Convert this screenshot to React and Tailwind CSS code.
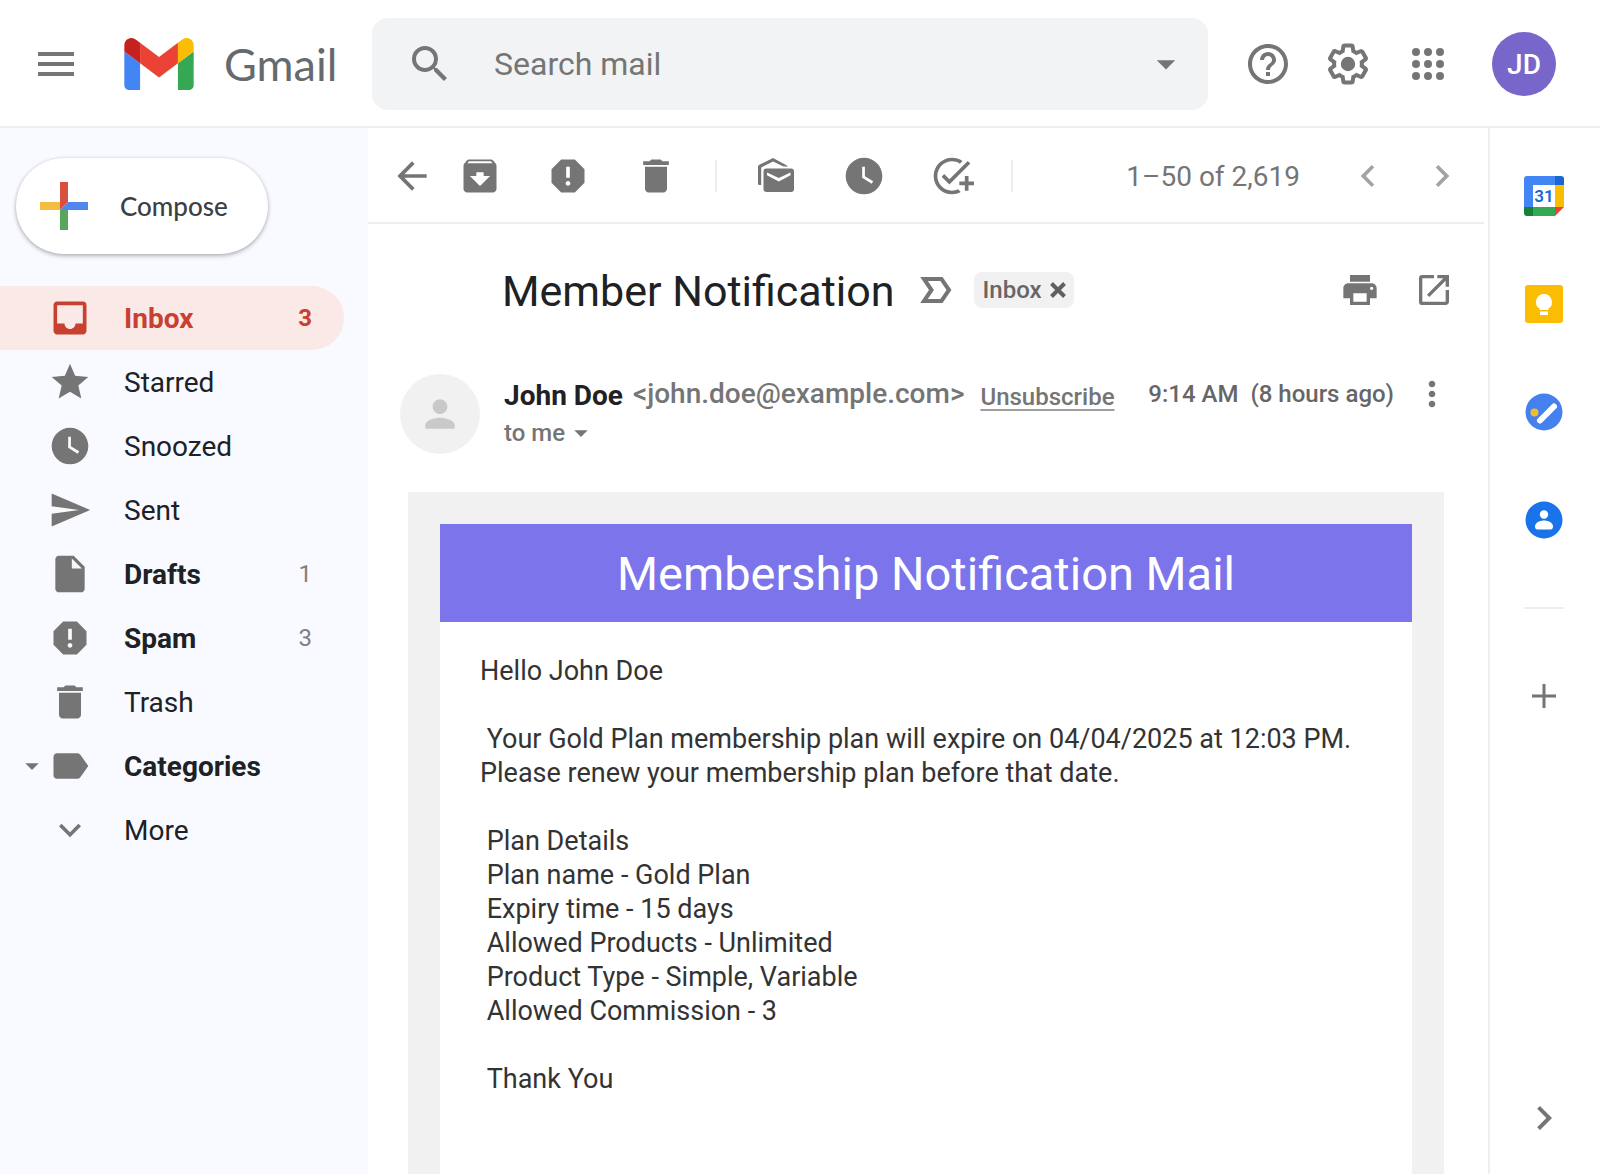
import React from "react";
import {
  MdMenu, MdSearch, MdHelpOutline, MdInbox, MdStar, MdWatchLater, MdSend,
  MdInsertDriveFile, MdReport, MdDelete, MdLabel, MdExpandMore, MdArrowBack,
  MdArchive, MdAddTask, MdPrint, MdOpenInNew, MdMoreVert,
  MdPerson, MdChevronLeft, MdChevronRight, MdArrowDropDown,
} from "react-icons/md";

function GmailLogo() {
  return (
    <svg viewBox="52 42 88 66" className="h-[52px] w-[70px]" aria-hidden="true">
      <path fill="#4285f4" d="M58 108h14V74L52 59v43c0 3.32 2.69 6 6 6" />
      <path fill="#34a853" d="M120 108h14c3.32 0 6-2.69 6-6V59l-20 15" />
      <path fill="#fbbc04" d="M120 48v26l20-15v-8c0-7.42-8.47-11.65-14.4-7.2" />
      <path fill="#ea4335" d="M72 74V48l24 18 24-18v26L96 92" />
      <path fill="#c5221f" d="M52 51v8l20 15V48l-5.6-4.2c-5.94-4.45-14.4-.22-14.4 7.2" />
    </svg>
  );
}

function SettingsIcon() {
  return (
    <svg viewBox="0 0 24 24" fill="currentColor" className="size-12" aria-hidden="true">
      <path d="M13.85 22.25h-3.7c-.74 0-1.36-.54-1.45-1.27l-.27-1.89c-.27-.14-.53-.29-.79-.46l-1.8.72c-.7.26-1.47-.03-1.81-.65L2.2 15.53c-.35-.66-.2-1.44.36-1.88l1.53-1.19c-.01-.15-.02-.3-.02-.46 0-.15.01-.31.02-.46l-1.52-1.19c-.59-.45-.74-1.26-.37-1.88l1.85-3.19c.34-.62 1.11-.9 1.79-.63l1.81.73c.26-.17.52-.32.78-.46l.27-1.91c.09-.7.71-1.25 1.44-1.25h3.7c.74 0 1.36.54 1.45 1.27l.27 1.89c.27.14.53.29.79.46l1.8-.72c.71-.26 1.48.03 1.82.65l1.84 3.18c.36.66.2 1.44-.36 1.88l-1.52 1.19c.01.15.02.3.02.46s-.01.31-.02.46l1.52 1.19c.56.45.72 1.23.37 1.86l-1.86 3.22c-.34.62-1.11.9-1.8.63l-1.8-.72c-.26.17-.52.32-.78.46l-.27 1.91c-.1.68-.72 1.22-1.46 1.22zm-3.23-2h2.76l.37-2.55.53-.22c.44-.18.88-.44 1.34-.78l.45-.34 2.38.96 1.38-2.4-2.03-1.58.07-.56c.03-.26.06-.51.06-.78s-.03-.53-.06-.78l-.07-.56 2.03-1.58-1.39-2.4-2.39.96-.45-.35c-.42-.32-.87-.58-1.33-.77l-.52-.22-.37-2.55h-2.76l-.37 2.55-.53.21c-.44.19-.88.44-1.34.79l-.45.33-2.38-.95-1.39 2.39 2.03 1.58-.07.56a7 7 0 0 0-.06.79c0 .26.02.53.06.78l.07.56-2.03 1.58 1.38 2.4 2.39-.96.45.35c.43.33.86.58 1.33.77l.53.22.38 2.55z" />
      <circle cx="12" cy="12" r="3.6" />
    </svg>
  );
}

function AppsIcon() {
  return (
    <svg viewBox="0 0 24 24" fill="currentColor" className="size-12" aria-hidden="true">
      {[6, 12, 18].map((y) => [6, 12, 18].map((x) => <circle key={`${x}-${y}`} cx={x} cy={y} r="2" />))}
    </svg>
  );
}

function ComposePlus() {
  return (
    <svg viewBox="0 0 48 48" className="size-12" aria-hidden="true">
      <path fill="#d95040" d="M20 0h8v20l-8 8z" />
      <path fill="#f2bd42" d="M0 20h20v8H0z" />
      <path fill="#58a55c" d="M20 28h8v20h-8z" />
      <path fill="#5186ec" d="M28 20h20v8H20z" />
    </svg>
  );
}

function UnreadIcon() {
  return (
    <svg viewBox="0 0 44 44" className="size-11" fill="currentColor" aria-hidden="true">
      <path d="M4 30V13c0-1 .4-1.700 1.300-2.200L19 4l13.500 7.200c.6.300 1 .8 1.200 1.300h-4.200L19 7.500 7.200 13.500V31H6c-1.200 0-2-.4-2-1z" />
      <path fillRule="evenodd" d="M12.500 14.500H37a3 3 0 0 1 3 3V35a3 3 0 0 1-3 3H12.500a3 3 0 0 1-3-3V17.500a3 3 0 0 1 3-3zm.5 4v2.700L24.800 27.500l11.700-6.300v-2.700L24.800 24z" />
    </svg>
  );
}

function ImportantIcon() {
  return (
    <svg viewBox="0 0 32 26" className="ml-[26px] h-[26px] w-8 shrink-0" fill="none" stroke="currentColor" strokeWidth="4" aria-hidden="true">
      <path d="M4 2h17.500L29 13l-7.500 11H4l7.500-11z" />
    </svg>
  );
}

function RemoveIcon() {
  return (
    <svg viewBox="0 0 16 16" className="size-4" stroke="#5f5f5f" strokeWidth="4" aria-hidden="true">
      <path d="M1.500 1.500l13 13M14.500 1.500l-13 13" />
    </svg>
  );
}

function CalendarIcon() {
  return (
    <svg viewBox="0 0 40 40" className="size-10" aria-hidden="true">
      <path fill="#4285f4" d="M3 0h28v10H10v21H0V3a3 3 0 0 1 3-3z" />
      <path fill="#1967d2" d="M31 0h6a3 3 0 0 1 3 3v6h-9z" />
      <path fill="#fbbc04" d="M31 9h9v22h-9z" />
      <path fill="#ea4335" d="M31 31h9l-9 9z" />
      <path fill="#34a853" d="M9 31h22v9H9z" />
      <path fill="#188038" d="M0 31h9v9H3a3 3 0 0 1-3-3z" />
      <path fill="#fff" d="M9 9h22v22H9z" />
      <text x="20" y="26" textAnchor="middle" fontFamily="Roboto, sans-serif" fontSize="17" fontWeight="600" fill="#1967d2">31</text>
    </svg>
  );
}

function KeepIcon() {
  return (
    <svg viewBox="0 0 40 40" className="size-10" aria-hidden="true">
      <rect x="1" y="1" width="38" height="38" rx="3" fill="#fbbc04" />
      <path fill="#fff" d="M20 10a8 8 0 0 0-4.500 14.600V26h9v-1.400A8 8 0 0 0 20 10zM16 27.500h8V31h-8z" />
    </svg>
  );
}

function TasksIcon() {
  return (
    <svg viewBox="0 0 40 40" className="size-10" aria-hidden="true">
      <circle cx="20" cy="20" r="18.500" fill="#4480ee" />
      <circle cx="10.500" cy="20.500" r="4" fill="#f2bd2b" />
      <path d="M16 28.500 30 14.500" stroke="#fff" strokeWidth="6" strokeLinecap="round" />
    </svg>
  );
}

function ContactsIcon() {
  return (
    <svg viewBox="0 0 40 40" className="size-10" aria-hidden="true">
      <circle cx="20" cy="20" r="18.500" fill="#1a73e8" />
      <circle cx="20" cy="14.500" r="4.200" fill="#fff" />
      <path fill="#fff" d="M11 26.500c0-4 5-6 9-6s9 2 9 6c0 1.700-1 3-2.500 3h-13c-1.500 0-2.500-1.300-2.500-3z" />
    </svg>
  );
}

function IconButton({ label, className = "", children }) {
  return (
    <button type="button" aria-label={label} className={`flex shrink-0 items-center justify-center ${className}`}>
      {children}
    </button>
  );
}

const folders = [
  { name: "Inbox", Icon: MdInbox, count: "3", active: true, strong: true },
  { name: "Starred", Icon: MdStar },
  { name: "Snoozed", Icon: MdWatchLater },
  { name: "Sent", Icon: MdSend },
  { name: "Drafts", Icon: MdInsertDriveFile, count: "1", strong: true },
  { name: "Spam", Icon: MdReport, count: "3", strong: true },
  { name: "Trash", Icon: MdDelete },
  { name: "Categories", Icon: MdLabel, strong: true, expandable: true },
  { name: "More", Icon: MdExpandMore },
];

function Folder({ name, Icon, count, active, strong, expandable }) {
  return (
    <li>
      <a
        href="#"
        className={`flex h-16 items-center rounded-r-full pr-8 ${active ? "bg-[#fae9e7] text-[#c8402f]" : "text-[#202124]"}`}
      >
        <span className="flex w-12 justify-end text-[#757575]">
          {expandable && <MdArrowDropDown className="size-8" />}
        </span>
        <Icon className={`size-11 shrink-0 ${active ? "" : "text-[#757575]"}`} />
        <span className={`ml-8 flex-1 pt-0.5 text-[28px] leading-8 ${strong ? "font-bold" : ""}`}>{name}</span>
        {count && <span className={`text-2xl ${active ? "font-bold" : "text-[#808080]"}`}>{count}</span>}
      </a>
    </li>
  );
}

function Header() {
  return (
    <header className="flex h-32 items-center border-b-2 border-[#eeeeee] pr-11 pt-0.5 text-[#757575]">
      <div className="flex w-[372px] shrink-0 items-center pl-8">
        <IconButton label="Main menu"><MdMenu className="size-12" /></IconButton>
        <a href="#" className="ml-11 flex items-center gap-[30px] text-[#666a6e]">
          <GmailLogo />
          <span className="font-[Lato,sans-serif] text-[45px] leading-[52px]">Gmail</span>
        </a>
      </div>
      <form className="flex h-[92px] flex-1 items-center rounded-2xl bg-[#f1f3f4] pl-[34px] pr-5">
        <IconButton label="Search"><MdSearch className="size-12" /></IconButton>
        <input
          type="text"
          aria-label="Search mail"
          placeholder="Search mail"
          className="ml-10 min-w-0 flex-1 bg-transparent text-[32px] outline-none placeholder:text-[#757575]"
        />
        <IconButton label="Show search options"><MdArrowDropDown className="size-11" /></IconButton>
      </form>
      <div className="ml-9 flex items-center gap-8">
        <IconButton label="Support"><MdHelpOutline className="size-12" /></IconButton>
        <IconButton label="Settings"><SettingsIcon /></IconButton>
        <IconButton label="Google apps"><AppsIcon /></IconButton>
      </div>
      <button type="button" className="ml-10 size-16 shrink-0 rounded-full bg-[#7966cb] pt-0.5 text-[28px] font-medium text-white">
        JD
      </button>
    </header>
  );
}

function Toolbar() {
  return (
    <div className="mr-1 flex h-24 items-center border-b-2 border-[#eeeeee] pl-[22px] pt-0.5 text-[#757575]">
      <IconButton label="Back"><MdArrowBack className="size-11" /></IconButton>
      <div className="ml-6 flex items-center gap-11">
        <IconButton label="Archive"><MdArchive className="size-11" /></IconButton>
        <IconButton label="Report spam"><MdReport className="size-11" /></IconButton>
        <IconButton label="Delete"><MdDelete className="size-11" /></IconButton>
      </div>
      <span className="mx-[37px] h-8 w-0.5 bg-[#eeeeee]" />
      <div className="flex items-center gap-11">
        <IconButton label="Mark as unread"><UnreadIcon /></IconButton>
        <IconButton label="Snooze"><MdWatchLater className="size-11" /></IconButton>
        <IconButton label="Add to tasks"><MdAddTask className="size-11" /></IconButton>
      </div>
      <span className="ml-[37px] h-8 w-0.5 bg-[#eeeeee]" />
      <span className="ml-auto pt-0.5 text-[28px]">1–50 of 2,619</span>
      <div className="ml-[46px] mr-5 flex gap-[30px] text-[#a3a3a3]">
        <IconButton label="Newer"><MdChevronLeft className="size-11" /></IconButton>
        <IconButton label="Older"><MdChevronRight className="size-11" /></IconButton>
      </div>
    </div>
  );
}

const planLines = [
  "Plan Details",
  "Plan name - Gold Plan",
  "Expiry time - 15 days",
  "Allowed Products - Unlimited",
  "Product Type - Simple, Variable",
  "Allowed Commission - 3",
];

function Message() {
  return (
    <article className="flex flex-1 flex-col">
      <div className="mt-10 flex h-[52px] items-center pl-[134px] pr-[34px] text-[#757575]">
        <h1 className="pt-0.5 text-[43px] leading-[52px] text-[#202124]">Member Notification</h1>
        <ImportantIcon />
        <span className="ml-[22px] flex h-9 items-center gap-2 rounded-lg bg-[#f1f1f1] px-2 text-2xl font-medium text-[#666666]">
          Inbox
          <IconButton label="Remove label Inbox"><RemoveIcon /></IconButton>
        </span>
        <div className="ml-auto flex gap-[34px]">
          <IconButton label="Print"><MdPrint className="size-10" /></IconButton>
          <IconButton label="Open in new window"><MdOpenInNew className="size-10" /></IconButton>
        </div>
      </div>

      <div className="mt-[58px] flex pl-8 pr-9">
        <span className="flex size-20 shrink-0 items-center justify-center rounded-full bg-[#f1f1f1] text-[#c9c9c9]">
          <MdPerson className="size-11" />
        </span>
        <div className="ml-6 flex-1">
          <div className="flex h-10 items-center text-[#757575]">
            <span className="pt-1 text-[28px] font-bold text-[#202124]">John Doe</span>
            <span className="ml-2.5 text-[28px] font-medium">&lt;john.doe@example.com&gt;</span>
            <a href="#" className="ml-4 pt-1.5 text-2xl font-medium underline decoration-[#9e9e9e] decoration-2 underline-offset-4">Unsubscribe</a>
            <span className="ml-auto flex gap-3 text-2xl font-medium text-[#666666]">
              <span>9:14 AM</span>
              <span>(8 hours ago)</span>
            </span>
            <IconButton label="More" className="ml-[18px]"><MdMoreVert className="size-10" /></IconButton>
          </div>
          <button type="button" className="flex h-9 items-center pt-0.5 text-2xl font-medium text-[#757575]">
            to me
            <MdArrowDropDown className="size-8" />
          </button>
        </div>
      </div>

      <div className="ml-10 mr-11 mt-[38px] flex flex-1 flex-col bg-[#f1f1f1] px-8 pt-8">
        <h2 className="bg-[#7b74eb] pb-5 pt-[22px] text-center text-[47px] leading-[56px] text-white">
          Membership Notification Mail
        </h2>
        <div className="flex-1 whitespace-pre-wrap bg-white px-10 pb-8 pt-8 text-[27px] leading-[34px] text-[#333333]">
          <p>Hello John Doe</p>
          <p className="mt-[34px]">{" Your Gold Plan membership plan will expire on 04/04/2025 at 12:03 PM. Please renew your membership plan before that date."}</p>
          <div className="mt-[34px]">
            {planLines.map((line) => <p key={line}>{" " + line}</p>)}
          </div>
          <p className="mt-[34px]">{" Thank You"}</p>
        </div>
      </div>
    </article>
  );
}

function SidePanel() {
  return (
    <aside className="flex w-28 shrink-0 flex-col items-center border-l-2 border-[#eeeeee] pb-8 pr-0.5 pt-12 text-[#757575]">
      <div className="flex flex-col gap-[68px]">
        <IconButton label="Calendar"><CalendarIcon /></IconButton>
        <IconButton label="Keep"><KeepIcon /></IconButton>
        <IconButton label="Tasks"><TasksIcon /></IconButton>
        <IconButton label="Contacts"><ContactsIcon /></IconButton>
      </div>
      <span className="mt-[67px] h-0.5 w-10 bg-[#eeeeee]" />
      <IconButton label="Get add-ons" className="mt-[75px]">
        <svg viewBox="0 0 24 24" className="size-6" fill="currentColor" aria-hidden="true">
          <path d="M10.500 0h3v10.500H24v3H13.500V24h-3V13.500H0v-3h10.500z" />
        </svg>
      </IconButton>
      <IconButton label="Hide side panel" className="mt-auto"><MdChevronRight className="size-12" /></IconButton>
    </aside>
  );
}

export default function App() {
  return (
    <div className="flex min-h-screen flex-col bg-white font-[Roboto,sans-serif]">
      <Header />
      <div className="flex flex-1">
        <nav className="w-[368px] shrink-0 bg-[#f8faff] pt-[30px]">
          <button
            type="button"
            className="ml-4 flex h-24 w-[252px] items-center gap-8 rounded-full bg-white pl-6 font-[Lato,sans-serif] text-[26px] font-medium text-[#3c4043] shadow-[0_2px_4px_rgba(60,64,67,0.35),0_0_3px_rgba(60,64,67,0.15)]"
          >
            <ComposePlus />
            Compose
          </button>
          <ul className="mr-6 mt-8">
            {folders.map((f) => <Folder key={f.name} {...f} />)}
          </ul>
        </nav>
        <main className="flex min-w-0 flex-1 flex-col">
          <Toolbar />
          <Message />
        </main>
        <SidePanel />
      </div>
    </div>
  );
}
